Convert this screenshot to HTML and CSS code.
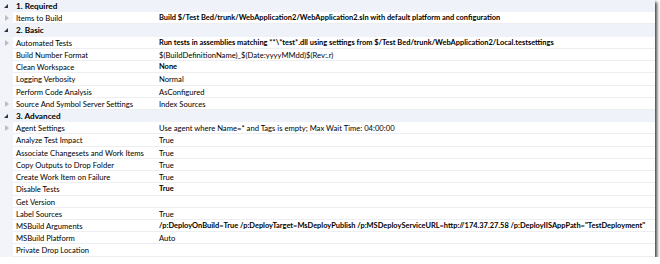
FILE: index.html
```html
<!DOCTYPE html>
<html lang="en">
<head>
    <meta charset="UTF-8">
    <title>Build Definition Process Parameters</title>
    <link rel="stylesheet" href="styles.css">
</head>
<body>
    <div class="grid">
        <div class="row header"><span class="toggle open"></span><span class="cat">1. Required</span></div>
        <div class="row"><span class="toggle closed"></span><span class="name">Items to Build</span><span class="value bold">Build $/Test Bed/trunk/WebApplication2/WebApplication2.sln with default platform and configuration</span></div>

        <div class="row header"><span class="toggle open"></span><span class="cat">2. Basic</span></div>
        <div class="row"><span class="toggle closed"></span><span class="name">Automated Tests</span><span class="value bold">Run tests in assemblies matching **\*test*.dll using settings from $/Test Bed/trunk/WebApplication2/Local.testsettings</span></div>
        <div class="row"><span class="toggle"></span><span class="name">Build Number Format</span><span class="value">$(BuildDefinitionName)_$(Date:yyyyMMdd)$(Rev:.r)</span></div>
        <div class="row"><span class="toggle"></span><span class="name">Clean Workspace</span><span class="value bold">None</span></div>
        <div class="row"><span class="toggle"></span><span class="name">Logging Verbosity</span><span class="value">Normal</span></div>
        <div class="row"><span class="toggle"></span><span class="name">Perform Code Analysis</span><span class="value">AsConfigured</span></div>
        <div class="row"><span class="toggle closed"></span><span class="name">Source And Symbol Server Settings</span><span class="value">Index Sources</span></div>

        <div class="row header"><span class="toggle open"></span><span class="cat">3. Advanced</span></div>
        <div class="row"><span class="toggle closed"></span><span class="name">Agent Settings</span><span class="value">Use agent where Name=* and Tags is empty; Max Wait Time: 04:00:00</span></div>
        <div class="row"><span class="toggle"></span><span class="name">Analyze Test Impact</span><span class="value">True</span></div>
        <div class="row"><span class="toggle"></span><span class="name">Associate Changesets and Work Items</span><span class="value">True</span></div>
        <div class="row"><span class="toggle"></span><span class="name">Copy Outputs to Drop Folder</span><span class="value">True</span></div>
        <div class="row"><span class="toggle"></span><span class="name">Create Work Item on Failure</span><span class="value">True</span></div>
        <div class="row"><span class="toggle"></span><span class="name">Disable Tests</span><span class="value bold">True</span></div>
        <div class="row"><span class="toggle"></span><span class="name">Get Version</span><span class="value"></span></div>
        <div class="row"><span class="toggle"></span><span class="name">Label Sources</span><span class="value">True</span></div>
        <div class="row"><span class="toggle"></span><span class="name">MSBuild Arguments</span><span class="value bold">/p:DeployOnBuild=True /p:DeployTarget=MsDeployPublish /p:MSDeployServiceURL=http://174.37.27.58 /p:DeployIISAppPath="TestDeployment"</span></div>
        <div class="row"><span class="toggle"></span><span class="name">MSBuild Platform</span><span class="value">Auto</span></div>
        <div class="row"><span class="toggle"></span><span class="name">Private Drop Location</span><span class="value"></span></div>
    </div>
</body>
</html>
```

FILE: styles.css
```css
body {
    margin: 0;
    background: #fff;
    font-family: Lato, "Noto Sans", sans-serif;
    font-size: 7.65px;
    color: #000;
}
.grid {
    width: 655px;
    background: #f2f4f9;
    box-shadow: 2px 2px 3px rgba(0, 0, 0, 0.75);
    overflow: hidden;
}
.row {
    display: grid;
    grid-template-columns: 13px 145px 1fr;
    height: 12.22px;
    line-height: 12px;
    white-space: nowrap;
}
.row .name, .row .value {
    background: #fff;
    border-bottom: 1px solid #eceef2;
    box-sizing: border-box;
    overflow: hidden;
}
.name {
    padding-left: 3px;
}
.value {
    padding-left: 1px;
}
.bold, .cat {
    font-weight: bold;
}
.value.bold {
    font-size: 7.45px;
}
.header {
    background: #eff2f8;
}
.cat {
    grid-column: 2 / 4;
    padding-left: 3px;
    font-size: 8.2px;
}
.toggle {
    position: relative;
}
.toggle.open::before {
    content: "";
    position: absolute;
    left: 4px;
    top: 4px;
    border-left: 4px solid transparent;
    border-bottom: 4px solid #333;
}
.toggle.closed::before {
    content: "";
    position: absolute;
    left: 5px;
    top: 3px;
    border-top: 3px solid transparent;
    border-bottom: 3px solid transparent;
    border-left: 4px solid #b8bcc4;
}
```
